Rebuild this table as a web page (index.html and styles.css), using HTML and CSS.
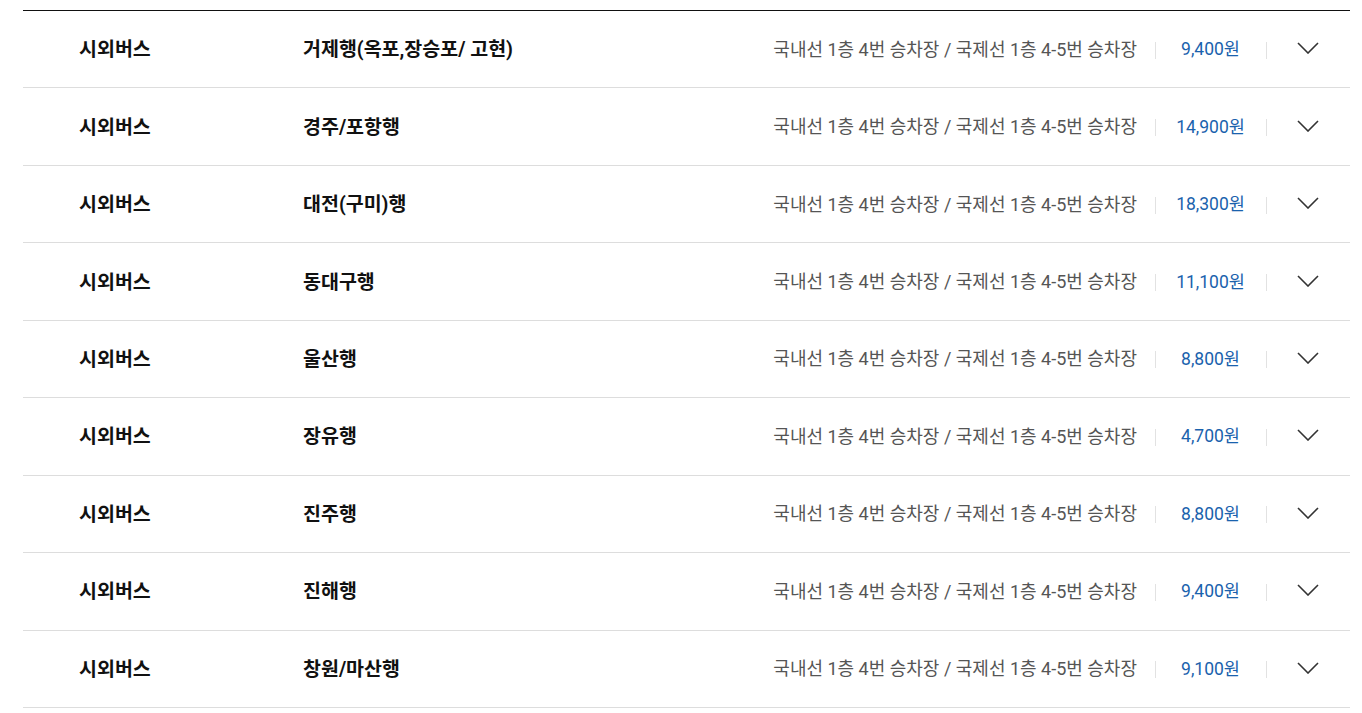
FILE: index.html
```html
<!DOCTYPE html>
<html lang="ko">
<head>
<meta charset="utf-8">
<title>시외버스</title>
<link rel="stylesheet" href="styles.css">
</head>
<body>
<ul class="list">
  <li class="row"><span class="type">시외버스</span><span class="dest">거제행(옥포,장승포/ 고현)</span><span class="place">국내선 1층 4번 승차장 / 국제선 1층 4-5번 승차장</span><span class="price">9,400원</span><span class="toggle"><svg viewBox="0 0 22 12" width="22" height="12"><path d="M1 1l10 10L21 1" fill="none" stroke="#333" stroke-width="1.6"/></svg></span></li>
  <li class="row"><span class="type">시외버스</span><span class="dest">경주/포항행</span><span class="place">국내선 1층 4번 승차장 / 국제선 1층 4-5번 승차장</span><span class="price">14,900원</span><span class="toggle"><svg viewBox="0 0 22 12" width="22" height="12"><path d="M1 1l10 10L21 1" fill="none" stroke="#333" stroke-width="1.6"/></svg></span></li>
  <li class="row"><span class="type">시외버스</span><span class="dest">대전(구미)행</span><span class="place">국내선 1층 4번 승차장 / 국제선 1층 4-5번 승차장</span><span class="price">18,300원</span><span class="toggle"><svg viewBox="0 0 22 12" width="22" height="12"><path d="M1 1l10 10L21 1" fill="none" stroke="#333" stroke-width="1.6"/></svg></span></li>
  <li class="row"><span class="type">시외버스</span><span class="dest">동대구행</span><span class="place">국내선 1층 4번 승차장 / 국제선 1층 4-5번 승차장</span><span class="price">11,100원</span><span class="toggle"><svg viewBox="0 0 22 12" width="22" height="12"><path d="M1 1l10 10L21 1" fill="none" stroke="#333" stroke-width="1.6"/></svg></span></li>
  <li class="row"><span class="type">시외버스</span><span class="dest">울산행</span><span class="place">국내선 1층 4번 승차장 / 국제선 1층 4-5번 승차장</span><span class="price">8,800원</span><span class="toggle"><svg viewBox="0 0 22 12" width="22" height="12"><path d="M1 1l10 10L21 1" fill="none" stroke="#333" stroke-width="1.6"/></svg></span></li>
  <li class="row"><span class="type">시외버스</span><span class="dest">장유행</span><span class="place">국내선 1층 4번 승차장 / 국제선 1층 4-5번 승차장</span><span class="price">4,700원</span><span class="toggle"><svg viewBox="0 0 22 12" width="22" height="12"><path d="M1 1l10 10L21 1" fill="none" stroke="#333" stroke-width="1.6"/></svg></span></li>
  <li class="row"><span class="type">시외버스</span><span class="dest">진주행</span><span class="place">국내선 1층 4번 승차장 / 국제선 1층 4-5번 승차장</span><span class="price">8,800원</span><span class="toggle"><svg viewBox="0 0 22 12" width="22" height="12"><path d="M1 1l10 10L21 1" fill="none" stroke="#333" stroke-width="1.6"/></svg></span></li>
  <li class="row"><span class="type">시외버스</span><span class="dest">진해행</span><span class="place">국내선 1층 4번 승차장 / 국제선 1층 4-5번 승차장</span><span class="price">9,400원</span><span class="toggle"><svg viewBox="0 0 22 12" width="22" height="12"><path d="M1 1l10 10L21 1" fill="none" stroke="#333" stroke-width="1.6"/></svg></span></li>
  <li class="row"><span class="type">시외버스</span><span class="dest">창원/마산행</span><span class="place">국내선 1층 4번 승차장 / 국제선 1층 4-5번 승차장</span><span class="price">9,100원</span><span class="toggle"><svg viewBox="0 0 22 12" width="22" height="12"><path d="M1 1l10 10L21 1" fill="none" stroke="#333" stroke-width="1.6"/></svg></span></li>
</ul>
</body>
</html>
```

FILE: styles.css
```css
html, body {
  margin: 0;
  padding: 0;
  background: #fff;
}
body {
  font-family: Roboto, "Noto Sans CJK KR", sans-serif;
  color: #111;
  padding: 10px 12px 0 23px;
}
.list {
  list-style: none;
  margin: 0;
  padding: 0;
  border-top: 1px solid #111;
}
.row {
  display: flex;
  align-items: center;
  height: 76.45px;
  border-bottom: 1px solid #ddd;
}
.type {
  flex: none;
  width: 280px;
  padding-left: 56px;
  box-sizing: border-box;
  font-size: 19.5px;
  font-weight: 700;
  color: #111;
  margin-bottom: 3px;
}
.dest {
  flex: 1;
  font-size: 19.5px;
  font-weight: 700;
  color: #111;
  margin-bottom: 3px;
}
.place {
  flex: none;
  font-size: 18px;
  color: #555;
  margin-right: 18px;
  margin-bottom: 3px;
}
.price {
  flex: none;
  width: 111px;
  text-align: center;
  font-size: 17.5px;
  color: #1a62ad;
  position: relative;
  margin-bottom: 3px;
}
.price::before,
.price::after {
  content: "";
  position: absolute;
  top: 50%;
  margin-top: -6px;
  width: 1px;
  height: 17px;
  background: #e2e2e2;
}
.price::before { left: 0; }
.price::after { right: -1px; }
.toggle {
  flex: none;
  width: 84px;
  display: flex;
  justify-content: center;
  align-items: center;
  margin-bottom: 2px;
}
.toggle svg {
  display: block;
}
```
